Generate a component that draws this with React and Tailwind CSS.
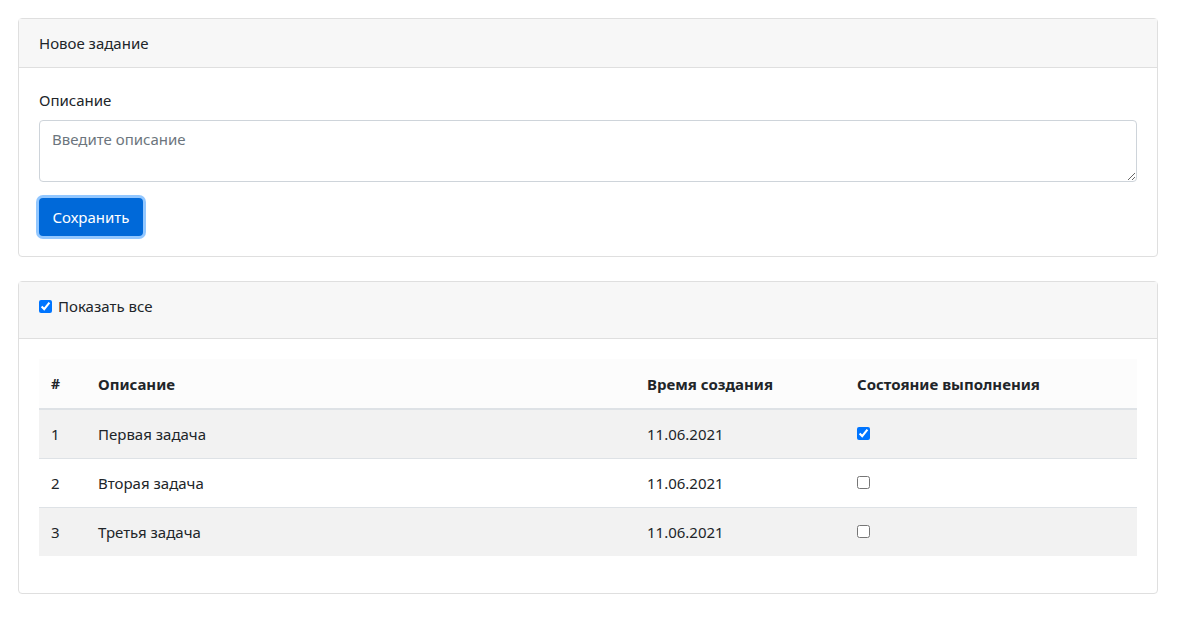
import React, { useState } from 'react';

const tasks = [
    { id: 1, description: 'Первая задача', created: '11.06.2021', done: true },
    { id: 2, description: 'Вторая задача', created: '11.06.2021', done: false },
    { id: 3, description: 'Третья задача', created: '11.06.2021', done: false },
];

const App = () => {
    const [showAll, setShowAll] = useState(true);
    const [items, setItems] = useState(tasks);

    const toggle = (id) => {
        setItems(items.map((t) => (t.id === id ? { ...t, done: !t.done } : t)));
    };

    return (
        <div
            className="min-h-[618px] bg-white py-[18px] pl-[18px] text-[15px] leading-6 text-[#212529]"
            style={{ fontFamily: '"Noto Sans", "Open Sans", sans-serif' }}
        >
            <div className="w-[1140px]">
                {/* New task */}
                <div className="rounded border border-[#dfdfdf] bg-white">
                    <div className="border-b border-[#dfdfdf] bg-[#f7f7f7] px-5 py-3">Новое задание</div>
                    <div className="p-5">
                        <label className="mb-2 block">Описание</label>
                        <textarea
                            rows={2}
                            placeholder="Введите описание"
                            className="block h-[62px] w-full rounded border border-[#ced4da] px-3 py-1.5 placeholder:text-[#6c757d] outline-none"
                        />
                        <button className="mt-4 h-[38px] w-[104px] rounded bg-[#0069d9] text-white shadow-[0_0_0_3px_rgba(38,143,255,0.5)]">
                            Сохранить
                        </button>
                    </div>
                </div>

                {/* Task list */}
                <div className="mt-6 rounded border border-[#dfdfdf] bg-white">
                    <div className="h-[57px] border-b border-[#dfdfdf] bg-[#f7f7f7] px-5 pt-3">
                        <label className="flex h-6 items-center gap-1.5">
                            <input
                                type="checkbox"
                                checked={showAll}
                                onChange={(e) => setShowAll(e.target.checked)}
                                className="m-0 h-[13px] w-[13px]"
                            />
                            <span>Показать все</span>
                        </label>
                    </div>
                    <div className="px-5 pt-5 pb-[37px]">
                        <table className="w-full border-collapse text-left">
                            <thead>
                                <tr className="h-[50px] border-b-2 border-[#dee2e6] bg-[#fcfcfc] font-bold">
                                    <th className="w-[47px] px-3 text-[14px]">#</th>
                                    <th className="w-[549px] px-3">Описание</th>
                                    <th className="w-[210px] px-3">Время создания</th>
                                    <th className="px-3">Состояние выполнения</th>
                                </tr>
                            </thead>
                            <tbody>
                                {items.map((t, i) => (
                                    <tr
                                        key={t.id}
                                        className={`h-[49px] ${i > 0 ? 'border-t border-[#dee2e6]' : ''} ${i % 2 === 0 ? 'bg-[#f2f2f2]' : 'bg-white'}`}
                                    >
                                        <td className="px-3">{t.id}</td>
                                        <td className="px-3">{t.description}</td>
                                        <td className="px-3">{t.created}</td>
                                        <td className="px-3">
                                            <input
                                                type="checkbox"
                                                checked={t.done}
                                                onChange={() => toggle(t.id)}
                                                className="m-0 block h-[13px] w-[13px]"
                                            />
                                        </td>
                                    </tr>
                                ))}
                            </tbody>
                        </table>
                    </div>
                </div>
            </div>
        </div>
    );
};

export default App;
